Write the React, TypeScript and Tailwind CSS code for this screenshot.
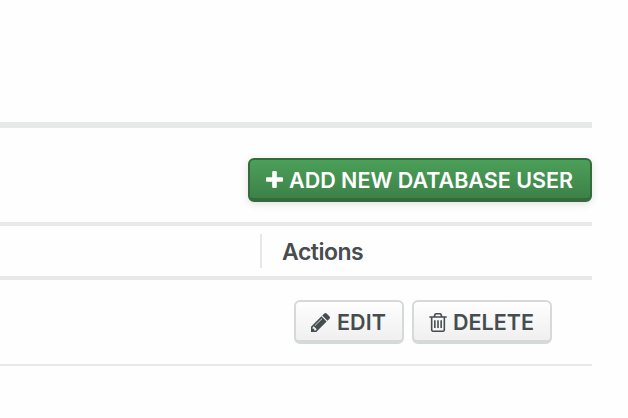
import type { ReactNode } from "react";

function Icon({ box, className, d }: { box: string; className: string; d: string }) {
  return (
    <svg viewBox={box} className={`shrink-0 fill-current ${className}`} aria-hidden="true">
      <path d={d} />
    </svg>
  );
}

const PLUS =
  "M1600 736v192q0 40-28 68t-68 28h-416v416q0 40-28 68t-68 28h-192q-40 0-68-28t-28-68v-416h-416q-40 0-68-28t-28-68v-192q0-40 28-68t68-28h416v-416q0-40 28-68t68-28h192q40 0 68 28t28 68v416h416q40 0 68 28t28 68z";
const PENCIL =
  "M491 1536l91-91-235-235-91 91v107h128v128h107zm523-928q0-22-22-22-10 0-17 7l-542 542q-7 7-7 17 0 22 22 22 10 0 17-7l542-542q7-7 7-17zm-54-192l416 416-832 832h-416v-416zm683 96q0 53-37 90l-166 166-416-416 166-165q36-38 90-38 53 0 91 38l235 234q37 39 37 91z";
const TRASH =
  "M704 736v576q0 14-9 23t-23 9h-64q-14 0-23-9t-9-23v-576q0-14 9-23t23-9h64q14 0 23 9t9 23zm256 0v576q0 14-9 23t-23 9h-64q-14 0-23-9t-9-23v-576q0-14 9-23t23-9h64q14 0 23 9t9 23zm256 0v576q0 14-9 23t-23 9h-64q-14 0-23-9t-9-23v-576q0-14 9-23t23-9h64q14 0 23 9t9 23zm128 724v-948h-896v948q0 22 7 40.5t14.5 27 10.5 8.5h832q3 0 10.5-8.5t14.5-27 7-40.5zm-672-1076h448l-48-117q-7-9-17-11h-317q-10 2-17 11zm928 32v64q0 14-9 23t-23 9h-96v948q0 83-47 143.5t-113 60.5h-832q-66 0-113-58.5t-47-141.5v-952h-96q-14 0-23-9t-9-23v-64q0-14 9-23t23-9h309l70-167q15-37 54-63t79-26h320q40 0 79 26t54 63l70 167h309q14 0 23 9t9 23z";

function RowButton({ className, children }: { className: string; children: ReactNode }) {
  return (
    <button
      className={`flex h-11 items-center rounded-md border-2 border-b-4 border-[#d5d9d9] bg-linear-to-b from-white to-[#eeeeee] bg-origin-border pl-[15px] text-[21.5px] leading-none font-semibold whitespace-nowrap ${className}`}
    >
      {children}
    </button>
  );
}

export default function App() {
  return (
    <main className="h-[418px] w-[628px] overflow-hidden bg-[#fefefe] pt-[122px] pr-9 font-['Inter','Liberation_Sans',sans-serif] text-[#464d4f]">
      <div className="h-1.5 bg-[#e7e9e9]" />
      <div className="flex h-[94px] justify-end pt-[30px]">
        <button className="flex h-11 w-[344px] items-center rounded-md border-2 border-b-4 border-[#336b3c] bg-linear-to-b from-[#4ba058] to-[#3d8149] pl-4 text-[21.5px] leading-none font-semibold whitespace-nowrap text-white shadow-[0_2px_8px_rgba(0,0,0,0.12)]">
          <Icon box="192 128 1408 1408" className="size-[17px]" d={PLUS} />
          <span className="ml-1.5 pt-1">ADD NEW DATABASE USER</span>
        </button>
      </div>
      <div className="flex h-[58px] items-center border-y-4 border-[#e8e8e8] pl-[260px]">
        <div className="flex h-[34px] items-center border-l-2 border-[#e8e8e8] pl-5 text-[23px] font-semibold">
          <span className="pt-0.5 tracking-[-0.5px]">Actions</span>
        </div>
      </div>
      <div className="flex h-[86px] gap-2 border-b-2 border-[#e8e8e8] pt-5 pl-[294px]">
        <RowButton className="w-[110px]">
          <Icon box="128 149 1515 1515" className="mt-0.5 size-[19px]" d={PENCIL} />
          <span className="ml-[7px] pt-1 tracking-[0.1px]">EDIT</span>
        </RowButton>
        <RowButton className="w-[140px]">
          <Icon box="192 128 1408 1536" className="mt-0.5 h-[19px] w-[18px]" d={TRASH} />
          <span className="ml-1.5 pt-1">DELETE</span>
        </RowButton>
      </div>
    </main>
  );
}
